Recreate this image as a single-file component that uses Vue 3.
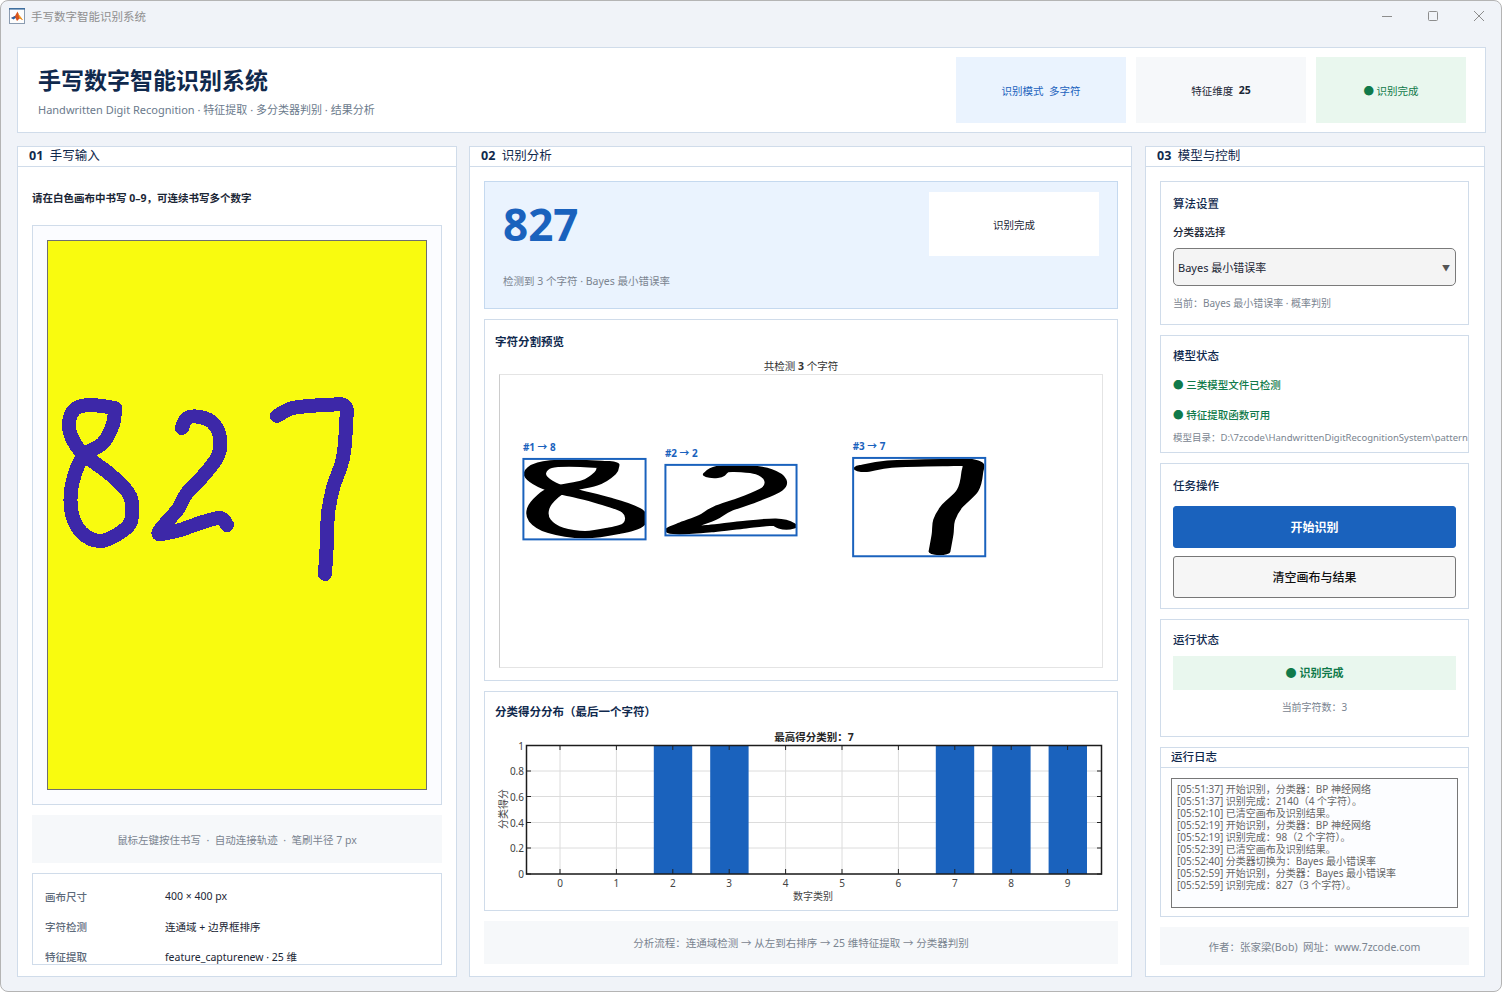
<script setup>
const digitPts = {
  8: [[115,407],[90,404],[75,408],[69,422],[72,437],[82,452],[95,462],[112,475],[130,495],[131,520],[118,533],[100,540],[82,532],[72,513],[71,490],[77,467],[85,453],[103,442],[113,423],[115,407]],
  2: [[182,427],[187,417],[200,416],[213,422],[220,437],[218,455],[203,475],[187,492],[178,508],[165,523],[159,533],[180,529],[200,522],[220,517],[227,524]],
  7: [[277,415],[293,407],[327,404],[345,405],[346,423],[343,457],[333,487],[328,513],[327,540],[325,573]],
};

// catmull-rom through the sampled stroke points
function smooth(pts) {
  let d = `M${pts[0][0]} ${pts[0][1]}`;
  for (let i = 0; i < pts.length - 1; i++) {
    const p0 = pts[i - 1] || pts[i];
    const p1 = pts[i];
    const p2 = pts[i + 1];
    const p3 = pts[i + 2] || p2;
    const c1x = p1[0] + (p2[0] - p0[0]) / 6;
    const c1y = p1[1] + (p2[1] - p0[1]) / 6;
    const c2x = p2[0] - (p3[0] - p1[0]) / 6;
    const c2y = p2[1] - (p3[1] - p1[1]) / 6;
    d += ` C${c1x.toFixed(1)} ${c1y.toFixed(1)} ${c2x.toFixed(1)} ${c2y.toFixed(1)} ${p2[0]} ${p2[1]}`;
  }
  return d;
}

const strokes = [digitPts[8], digitPts[2], digitPts[7]].map(smooth);

const segments = [
  { label: "#1 → 8", path: smooth(digitPts[8]), box: [522, 458, 122, 80], view: "62 397 76 151" },
  { label: "#2 → 2", path: smooth(digitPts[2]), box: [665, 464, 131, 70], view: "152 410 81 131" },
  { label: "#3 → 7", path: smooth(digitPts[7]), box: [854, 457, 132, 98], view: "270 396 84 185" },
];

const tickX = [560, 616.4, 672.8, 729.2, 785.6, 842, 898.4, 954.8, 1011.2, 1067.6];
const barIdx = [2, 3, 7, 8, 9];
const yTicks = [
  { y: 873, t: "0" },
  { y: 847, t: "0.2" },
  { y: 821.5, t: "0.4" },
  { y: 795.5, t: "0.6" },
  { y: 770, t: "0.8" },
  { y: 744.5, t: "1" },
];

const infoRows = [
  ["画布尺寸", "400 × 400 px"],
  ["字符检测", "连通域 + 边界框排序"],
  ["特征提取", "feature_capturenew · 25 维"],
];

const logs = [
  "[05:51:37] 开始识别，分类器：BP 神经网络",
  "[05:51:37] 识别完成：2140（4 个字符）。",
  "[05:52:10] 已清空画布及识别结果。",
  "[05:52:19] 开始识别，分类器：BP 神经网络",
  "[05:52:19] 识别完成：98（2 个字符）。",
  "[05:52:39] 已清空画布及识别结果。",
  "[05:52:40] 分类器切换为：Bayes 最小错误率",
  "[05:52:59] 开始识别，分类器：Bayes 最小错误率",
  "[05:52:59] 识别完成：827（3 个字符）。",
];
</script>

<template>
  <div class="window">
    <div class="titlebar">
      <svg class="app-icon" viewBox="0 0 16 16" width="16" height="16">
        <rect x="0.5" y="0.5" width="15" height="15" fill="#fdfdfd" stroke="#8a9bb0" />
        <rect x="0" y="0" width="16" height="1.6" fill="#3f6f9f" />
        <path d="M2 10 L6 8 L8.5 3.5 L10 7 L14 12 L10.5 10.5 L8 13 L6.5 10 Z" fill="#d9531e" />
        <path d="M2 10 L6 8 L6.5 10 L4.5 11.5 Z" fill="#2a62a8" />
        <path d="M8.5 3.5 L10 7 L14 12 L10.5 10.5 Z" fill="#f0a020" />
      </svg>
      <span class="win-title">手写数字智能识别系统</span>
      <div class="win-controls">
        <svg viewBox="0 0 12 12" width="12" height="12"><path d="M1 6.5H11" stroke="#8d8d8d" /></svg>
        <svg viewBox="0 0 12 12" width="12" height="12"><rect x="1.5" y="1.5" width="9" height="9" rx="1" fill="none" stroke="#8d8d8d" /></svg>
        <svg viewBox="0 0 12 12" width="12" height="12"><path d="M1 1L11 11M11 1L1 11" stroke="#8d8d8d" /></svg>
      </div>
    </div>

    <div class="main">
      <header class="hero">
        <div class="hero-text">
          <h1>手写数字智能识别系统</h1>
          <p>Handwritten Digit Recognition · 特征提取 · 多分类器判别 · 结果分析</p>
        </div>
        <div class="badge blue">识别模式&nbsp;&nbsp;多字符</div>
        <div class="badge gray">特征维度&nbsp;&nbsp;<b>25</b></div>
        <div class="badge green">● 识别完成</div>
      </header>

      <div class="columns">
        <section class="panel">
          <div class="panel-head"><b>01</b>&nbsp;&nbsp;手写输入</div>
          <div class="panel-body left-body">
            <div class="instruction">请在白色画布中书写 0–9，可连续书写多个数字</div>
            <div class="canvas-wrap">
              <svg class="draw" viewBox="47 239 380 550" width="380" height="550" shape-rendering="crispEdges">
                <path v-for="(d, i) in strokes" :key="i" :d="d" fill="none" stroke="#3d28a8" stroke-width="14" stroke-linecap="round" stroke-linejoin="round" />
              </svg>
            </div>
            <div class="note note-hint">鼠标左键按住书写&nbsp; · &nbsp;自动连接轨迹&nbsp; · &nbsp;笔刷半径 7 px</div>
            <div class="info">
              <div class="info-row" v-for="r in infoRows" :key="r[0]">
                <span class="info-key">{{ r[0] }}</span>
                <span>{{ r[1] }}</span>
              </div>
            </div>
          </div>
        </section>

        <section class="panel">
          <div class="panel-head"><b>02</b>&nbsp;&nbsp;识别分析</div>
          <div class="panel-body mid-body">
            <div class="result">
              <div class="result-top">
                <div class="result-num">827</div>
                <div class="result-tag">识别完成</div>
              </div>
              <div class="result-sub">检测到 3 个字符 · Bayes 最小错误率</div>
            </div>

            <div class="box seg-box">
              <div class="box-title">字符分割预览</div>
              <div class="seg-caption">共检测 <b>3</b> 个字符</div>
              <svg class="seg-plot" viewBox="499 373 604 294" width="604" height="294">
                <g v-for="s in segments" :key="s.label">
                  <text class="seg-label" :x="s.box[0] - 1" :y="s.box[1] - 8">{{ s.label }}</text>
                  <svg :x="s.box[0]" :y="s.box[1]" :width="s.box[2]" :height="s.box[3]" :viewBox="s.view" preserveAspectRatio="none">
                    <path :d="s.path" fill="none" stroke="#000" stroke-width="14" stroke-linecap="round" stroke-linejoin="round" />
                  </svg>
                  <rect :x="s.box[0] - 0.5" :y="s.box[1] - 0.5" :width="s.box[2] + 1" :height="s.box[3] + 1" fill="none" stroke="#1a62bd" stroke-width="2" />
                </g>
              </svg>
            </div>

            <div class="box score-box">
              <div class="box-title">分类得分分布（最后一个字符）</div>
              <svg class="score-plot" viewBox="485 727 632 178" width="632" height="178">
                <text class="chart-title" x="814" y="740" text-anchor="middle">最高得分类别：7</text>
                <g stroke="#dcdcdc">
                  <line v-for="t in yTicks" :key="t.t" x1="526" x2="1102" :y1="t.y" :y2="t.y" />
                  <line v-for="x in tickX" :key="x" :x1="x" :x2="x" y1="744" y2="873" />
                </g>
                <rect v-for="i in barIdx" :key="i" :x="tickX[i] - 19" y="744" width="38.4" height="129" fill="#1a62bd" />
                <g stroke="#222">
                  <g v-for="x in tickX" :key="x">
                    <line :x1="x" :x2="x" y1="744" y2="749" />
                    <line :x1="x" :x2="x" y1="868" y2="873" />
                  </g>
                  <g v-for="t in yTicks" :key="t.t">
                    <line x1="526" x2="531" :y1="t.y" :y2="t.y" />
                    <line x1="1097" x2="1102" :y1="t.y" :y2="t.y" />
                  </g>
                </g>
                <rect x="526.5" y="744.5" width="575" height="128.5" fill="none" stroke="#1c1c1c" stroke-width="1.5" />
                <text v-for="(x, i) in tickX" :key="x" class="tick" :x="x" y="886" text-anchor="middle">{{ i }}</text>
                <text v-for="t in yTicks" :key="t.t" class="tick" x="524" :y="t.y + 4" text-anchor="end">{{ t.t }}</text>
                <text class="axis-label" x="813" y="899" text-anchor="middle">数字类别</text>
                <text class="axis-label" transform="translate(507 808) rotate(-90)" text-anchor="middle">分类得分</text>
              </svg>
            </div>

            <div class="note note-flow">分析流程：连通域检测 → 从左到右排序 → 25 维特征提取 → 分类器判别</div>
          </div>
        </section>

        <section class="panel side">
          <div class="panel-head"><b>03</b>&nbsp;&nbsp;模型与控制</div>
          <div class="panel-body side-body">
            <div class="box algo">
              <div class="side-title">算法设置</div>
              <div class="field-label">分类器选择</div>
              <div class="select">
                <span>Bayes 最小错误率</span>
                <span class="caret">▼</span>
              </div>
              <div class="small-note">当前：Bayes 最小错误率 · 概率判别</div>
            </div>

            <div class="box model">
              <div class="side-title">模型状态</div>
              <div class="ok-line first">● 三类模型文件已检测</div>
              <div class="ok-line">● 特征提取函数可用</div>
              <div class="path-line">模型目录：D:\7zcode\HandwrittenDigitRecognitionSystem\pattern</div>
            </div>

            <div class="box actions">
              <div class="side-title">任务操作</div>
              <button class="btn primary">开始识别</button>
              <button class="btn">清空画布与结果</button>
            </div>

            <div class="box run">
              <div class="side-title">运行状态</div>
              <div class="run-state">● 识别完成</div>
              <div class="run-count">当前字符数：3</div>
            </div>

            <div class="log-panel">
              <div class="log-head">运行日志</div>
              <div class="log-body">
                <div class="log-text">
                  <div v-for="(l, i) in logs" :key="i">{{ l }}</div>
                </div>
              </div>
            </div>

            <div class="note note-author">作者：张家梁(Bob)&nbsp; 网址：www.7zcode.com</div>
          </div>
        </section>
      </div>
    </div>
  </div>
</template>

<style>
html,
body {
  margin: 0;
  height: 100%;
  overflow: hidden;
  background: #fff;
}
</style>

<style scoped>
.window {
  box-sizing: border-box;
  width: 1502px;
  height: 992px;
  border: 1px solid #b4b4b4;
  border-radius: 8px;
  background: #f0f3f8;
  overflow: hidden;
  font-family: "Noto Sans", "Noto Sans CJK SC", sans-serif;
  font-size: 11px;
  color: #1b2635;
}

.titlebar {
  display: flex;
  align-items: center;
  height: 30px;
  padding: 0 16px 0 8px;
}

.app-icon {
  margin-right: 6px;
}

.win-title {
  font-size: 11.5px;
  color: #8f8f8f;
}

.win-controls {
  margin-left: auto;
  display: flex;
  gap: 34px;
}

.main {
  padding: 16px 15px 14px 16px;
}

.hero {
  box-sizing: border-box;
  display: flex;
  align-items: stretch;
  gap: 10px;
  height: 86px;
  padding: 9px 19px 9px 20px;
  background: #fff;
  border: 1px solid #d0dcea;
}

.hero-text {
  flex: 1;
}

.hero h1 {
  margin: 5px 0 0;
  font-size: 23px;
  line-height: 36px;
  font-weight: 700;
  color: #10294d;
}

.hero p {
  margin: 4px 0 0;
  font-size: 11px;
  line-height: 16px;
  color: #6b7a8c;
}

.badge {
  display: flex;
  align-items: center;
  justify-content: center;
  width: 170px;
  font-size: 10.5px;
}

.badge.blue {
  background: #eaf3fe;
  color: #1a62bd;
}

.badge.gray {
  background: #f6f8fa;
}

.badge.green {
  width: 150px;
  background: #e9f7ee;
  color: #107a4a;
}

.columns {
  display: grid;
  grid-template-columns: 440px 663px 341px;
  column-gap: 12px;
  margin-top: 13px;
  height: 831px;
}

.panel {
  display: flex;
  flex-direction: column;
  min-height: 0;
  background: #fff;
  border: 1px solid #d0dcea;
}

.panel.side {
  margin-left: 1px;
}

.panel-head {
  flex: none;
  box-sizing: border-box;
  height: 20px;
  padding-left: 11px;
  border-bottom: 1px solid #d0dcea;
  font-size: 12.5px;
  line-height: 18px;
  color: #10294d;
}

.panel-body {
  flex: 1;
  min-height: 0;
  display: flex;
  flex-direction: column;
  gap: 10px;
}

.left-body {
  padding: 23px 14px 0 14px;
}

.instruction {
  height: 16px;
  margin-bottom: 9px;
  font-size: 10.5px;
  line-height: 16px;
  font-weight: 700;
}

.canvas-wrap {
  flex: none;
  box-sizing: border-box;
  height: 580px;
  padding: 14px;
  background: #fbfcff;
  border: 1px solid #d0dcea;
}

.draw {
  display: block;
  box-sizing: border-box;
  background: #f9fb0f;
  outline: 1px solid #6f6f6f;
  outline-offset: -1px;
}

.note {
  flex: none;
  display: flex;
  align-items: center;
  justify-content: center;
  background: #f6f8fa;
  color: #7a8490;
  font-size: 10.5px;
}

.note-hint {
  height: 48px;
}

.info {
  flex: none;
  box-sizing: border-box;
  height: 92px;
  padding: 7px 12px 0;
  border: 1px solid #d0dcea;
  overflow: hidden;
}

.info-row {
  display: flex;
  height: 30px;
  align-items: center;
  font-size: 10.5px;
}

.info-key {
  width: 120px;
  font-weight: 500;
  color: #5d6a7a;
}

.mid-body {
  padding: 14px 13px 0 14px;
}

.result {
  flex: none;
  box-sizing: border-box;
  height: 128px;
  padding: 10px 18px 0;
  background: #eaf3fe;
  border: 1px solid #c5d9ef;
}

.result-top {
  display: flex;
  justify-content: space-between;
  align-items: center;
  height: 64px;
}

.result-num {
  font-size: 44px;
  font-weight: 700;
  color: #1a62bd;
  line-height: 64px;
}

.result-tag {
  display: flex;
  align-items: center;
  justify-content: center;
  width: 170px;
  height: 64px;
  background: #fff;
  font-size: 10.5px;
}

.result-sub {
  margin-top: 17px;
  line-height: 16px;
  font-size: 10.5px;
  color: #7a8490;
}

.box {
  flex: none;
  box-sizing: border-box;
  background: #fff;
  border: 1px solid #d0dcea;
}

.box-title {
  font-size: 11.5px;
  line-height: 16px;
  font-weight: 700;
  color: #10294d;
  padding-left: 10px;
}

.seg-box {
  height: 362px;
  padding-top: 14px;
}

.seg-caption {
  margin-top: 8px;
  text-align: center;
  line-height: 16px;
  font-size: 10.5px;
  color: #333;
}

.seg-plot {
  display: block;
  margin-left: 14px;
  border-top: 1px solid #e4e4e4;
  border-left: 1px solid #ccc;
  border-right: 1px solid #e4e4e4;
  border-bottom: 1px solid #e4e4e4;
  box-sizing: border-box;
}

.seg-label {
  font-size: 10px;
  font-weight: 700;
  fill: #1a62bd;
}

.score-box {
  height: 220px;
  padding-top: 12px;
}

.score-plot {
  display: block;
  margin-top: 8px;
}

.chart-title {
  font-size: 10.5px;
  font-weight: 700;
  fill: #262626;
}

.tick {
  font-size: 10px;
  fill: #444;
}

.axis-label {
  font-size: 10px;
  fill: #444;
}

.note-flow {
  height: 43px;
}

.side-body {
  padding: 14px 15px 0 14px;
}

.side-title {
  font-size: 11.5px;
  line-height: 16px;
  font-weight: 500;
  color: #10294d;
}

.algo {
  height: 144px;
  padding: 14px 12px 0;
}

.field-label {
  margin-top: 12px;
  font-size: 10.5px;
  line-height: 16px;
  font-weight: 500;
}

.select {
  box-sizing: border-box;
  display: flex;
  justify-content: space-between;
  align-items: center;
  height: 38px;
  margin-top: 8px;
  padding: 0 5px 0 4px;
  background: #f4f4f4;
  border: 1px solid #7a7a7a;
  border-radius: 5px;
  font-size: 11px;
}

.caret {
  font-size: 8px;
  color: #555;
}

.small-note {
  margin-top: 9px;
  font-size: 10px;
  line-height: 16px;
  color: #7a8490;
}

.model {
  height: 118px;
  padding: 12px 12px 0;
}

.ok-line {
  margin-top: 14px;
  font-size: 10.5px;
  line-height: 16px;
  font-weight: 500;
  color: #107a4a;
}

.ok-line.first {
  margin-top: 13px;
}

.path-line {
  margin-top: 8px;
  font-size: 9.5px;
  line-height: 14px;
  white-space: nowrap;
  color: #7a8490;
}

.actions {
  height: 146px;
  padding: 14px 12px 0;
  display: flex;
  flex-direction: column;
}

.btn {
  box-sizing: border-box;
  height: 42px;
  margin-top: 8px;
  background: #f6f6f6;
  border: 1px solid #777;
  border-radius: 3px;
  font-family: inherit;
  font-size: 12px;
  font-weight: 500;
  color: #111;
}

.btn.primary {
  margin-top: 12px;
  background: #1a62bd;
  border-color: #1a62bd;
  color: #fff;
  font-weight: 700;
}

.run {
  height: 118px;
  padding: 12px 12px 0;
}

.run-state {
  height: 34px;
  margin-top: 8px;
  line-height: 34px;
  text-align: center;
  background: #e9f7ee;
  color: #107a4a;
  font-size: 11px;
  font-weight: 700;
}

.run-count {
  margin-top: 9px;
  text-align: center;
  line-height: 16px;
  font-size: 10px;
  color: #7a8490;
}

.log-panel {
  flex: none;
  box-sizing: border-box;
  height: 170px;
  border: 1px solid #d0dcea;
}

.log-head {
  box-sizing: border-box;
  height: 20px;
  padding-left: 10px;
  border-bottom: 1px solid #d0dcea;
  font-size: 11.5px;
  line-height: 18px;
  font-weight: 500;
  color: #10294d;
}

.log-body {
  padding: 10px 10px 0;
}

.log-text {
  box-sizing: border-box;
  height: 130px;
  padding: 4px 5px;
  background: #fcfdff;
  border: 1px solid #777;
  font-size: 10px;
  line-height: 12px;
  color: #666;
}

.note-author {
  height: 38px;
}
</style>
